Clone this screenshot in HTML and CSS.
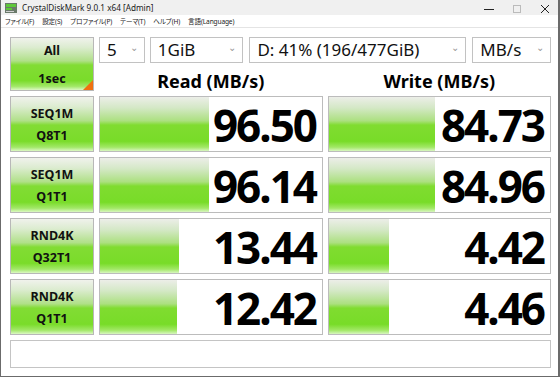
FILE: index.html
```html
<!DOCTYPE html>
<html lang="ja">
<head>
  <meta charset="UTF-8" />
  <title>CrystalDiskMark 9.0.1 x64 [Admin]</title>
  <link rel="stylesheet" href="styles.css">
</head>
<body>
  <div class="window">
    <!-- Title bar -->
    <div class="titlebar">
      <svg class="app-icon" width="12" height="10" viewBox="0 0 12 10">
        <rect x="0" y="0" width="12" height="10" fill="#6a7a6a"/>
        <rect x="1" y="1" width="10" height="3" fill="#5fc83a"/>
        <rect x="1" y="5" width="6" height="2" fill="#5fc83a"/>
        <rect x="1" y="8" width="8" height="1" fill="#d0d0d0"/>
      </svg>
      <span class="title">CrystalDiskMark 9.0.1 x64 [Admin]</span>
      <div class="win-controls">
        <svg width="10" height="10" viewBox="0 0 10 10"><path d="M0 5.5h10" stroke="#222" stroke-width="1"/></svg>
        <svg width="10" height="10" viewBox="0 0 10 10"><rect x="1.5" y="1.5" width="7" height="7" fill="none" stroke="#bbb" stroke-width="1"/></svg>
        <svg width="10" height="10" viewBox="0 0 10 10"><path d="M1 1l8 8M9 1l-8 8" stroke="#222" stroke-width="1"/></svg>
      </div>
    </div>
    <!-- Menu bar -->
    <div class="menubar">
      <span>ファイル(F)</span>
      <span>設定(S)</span>
      <span>プロファイル(P)</span>
      <span>テーマ(T)</span>
      <span>ヘルプ(H)</span>
      <span>言語(Language)</span>
    </div>

    <div class="main">
      <button class="test-btn all-btn">
        <span>All</span>
        <span>1sec</span>
        <i class="corner"></i>
      </button>
      <div class="top-right">
        <div class="selects">
          <div class="combo c-count">5<span class="chev">⌄</span></div>
          <div class="combo c-size">1GiB<span class="chev">⌄</span></div>
          <div class="combo c-drive">D: 41% (196/477GiB)<span class="chev">⌄</span></div>
          <div class="combo c-unit">MB/s<span class="chev">⌄</span></div>
        </div>
        <div class="headers">
          <div class="head">Read (MB/s)</div>
          <div class="head">Write (MB/s)</div>
        </div>
      </div>

      <button class="test-btn"><span>SEQ1M</span><span>Q8T1</span></button>
      <div class="cell"><div class="bar" style="width: 49%"></div><span class="val">96.50</span></div>
      <div class="cell"><div class="bar" style="width: 48%"></div><span class="val">84.73</span></div>

      <button class="test-btn"><span>SEQ1M</span><span>Q1T1</span></button>
      <div class="cell"><div class="bar" style="width: 49%"></div><span class="val">96.14</span></div>
      <div class="cell"><div class="bar" style="width: 48%"></div><span class="val">84.96</span></div>

      <button class="test-btn"><span>RND4K</span><span>Q32T1</span></button>
      <div class="cell"><div class="bar" style="width: 35.5%"></div><span class="val">13.44</span></div>
      <div class="cell"><div class="bar" style="width: 27%"></div><span class="val">4.42</span></div>

      <button class="test-btn"><span>RND4K</span><span>Q1T1</span></button>
      <div class="cell"><div class="bar" style="width: 34.5%"></div><span class="val">12.42</span></div>
      <div class="cell"><div class="bar" style="width: 27%"></div><span class="val">4.46</span></div>

      <div class="comment"></div>
    </div>
  </div>
</body>
</html>
```

FILE: styles.css
```css
* { box-sizing: border-box; }
body {
  margin: 0;
  width: 560px;
  height: 377px;
  overflow: hidden;
  background: #fff;
  font-family: 'Noto Sans', 'Noto Sans CJK JP', sans-serif;
  color: #000;
}
.window {
  width: 560px;
  height: 377px;
  border-left: 1px solid #6b6b6b;
  border-right: 2px solid #6b6b6b;
  border-bottom: 1px solid #6b6b6b;
  background: #fff;
}
/* Title bar */
.titlebar {
  height: 15px;
  background: #f0f0f0;
  display: flex;
  align-items: center;
  padding-left: 4px;
  font-size: 8.2px;
}
.app-icon { margin-right: 5px; }
.title { color: #1a1a1a; }
.win-controls {
  margin-left: auto;
  display: flex;
  gap: 18px;
  padding-right: 8px;
  padding-top: 2px;
}
/* Menu bar */
.menubar {
  height: 13px;
  display: flex;
  align-items: center;
  gap: 8px;
  padding-left: 4px;
  font-size: 6.6px;
  letter-spacing: -0.15px;
  font-feature-settings: "palt";
  color: #222;
  border-bottom: 1px solid #e4e4e4;
}
/* Main grid */
.main {
  display: grid;
  grid-template-columns: 84px 224px 223px;
  grid-template-rows: 54px repeat(4, 56px) 28px;
  column-gap: 5px;
  row-gap: 5px;
  padding: 9px 0 0 9px;
}
.test-btn {
  margin: 0;
  padding: 0;
  border: 1px solid #b8b8b8;
  position: relative;
  font-family: inherit;
  font-weight: 700;
  font-size: 12.5px;
  color: #111;
  display: flex;
  flex-direction: column;
  align-items: center;
  justify-content: center;
  gap: 7px;
  line-height: 15px;
  background: linear-gradient(to bottom, #f0f2ec 0%, #dcecd0 18%, #b0e088 44%, #82dc34 52%, #7adc2a 82%, #a2e868 93%, #dcf8c4 100%);
}
.all-btn { gap: 13px; padding-top: 1px; }
.corner {
  position: absolute;
  right: 0;
  bottom: 0;
  width: 0;
  height: 0;
  border-left: 10px solid transparent;
  border-bottom: 10px solid #f07010;
}
.top-right {
  grid-column: 2 / 4;
  display: flex;
  flex-direction: column;
}
.selects {
  display: flex;
  height: 26px;
  gap: 5px;
}
.combo {
  position: relative;
  height: 26px;
  border: 1px solid #c2c2c2;
  padding-left: 7px;
  font-size: 17px;
  line-height: 24px;
  color: #111;
}
.c-count { width: 46px; }
.c-size { width: 94px; }
.c-drive { width: 218px; margin-left: 1px; }
.c-unit { width: 79px; margin-left: 1px; }
.chev {
  position: absolute;
  right: 6px;
  top: -3px;
  font-size: 10px;
  color: #999;
}
.headers {
  display: flex;
  gap: 5px;
  flex: 1;
}
.head {
  flex: 1;
  text-align: center;
  font-weight: 700;
  font-size: 18px;
  line-height: 24px;
  padding-top: 6px;
}
.cell {
  position: relative;
  border: 1px solid #bcbcbc;
  display: flex;
  align-items: center;
  justify-content: flex-end;
  padding-right: 6px;
}
.bar {
  position: absolute;
  left: 0;
  top: 0;
  bottom: 0;
  background: linear-gradient(to bottom, #eceee8 0%, #d4e8c6 20%, #ace080 44%, #80dc30 52%, #78dc28 82%, #a2e866 93%, #d8f6c0 100%);
}
.val {
  position: relative;
  font-weight: 700;
  font-size: 44px;
  letter-spacing: -2px;
  line-height: 1;
  padding-top: 1px;
}
.comment {
  grid-column: 1 / 4;
  border: 1px solid #c4c4c4;
}
```
